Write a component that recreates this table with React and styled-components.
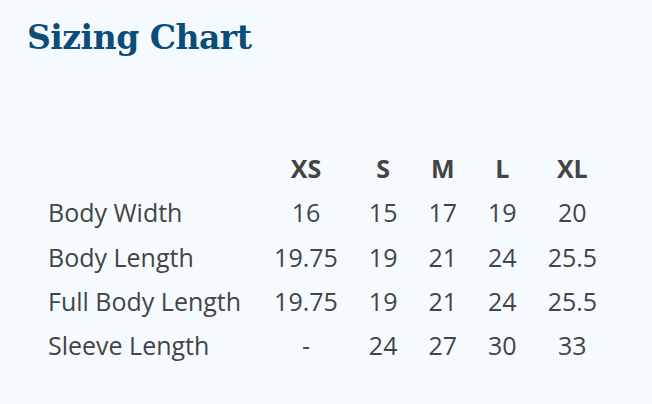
import React from "react";
import styled, { createGlobalStyle } from "styled-components";

const Global = createGlobalStyle`
  html, body { margin: 0; padding: 0; background: #f5faff; }
  body { font-family: "Open Sans", "Noto Sans", sans-serif; }
`;

const Page = styled.div`
  width: 652px;
  height: 404px;
  box-sizing: border-box;
  padding: 16px 0 0 27px;
  background: #f5faff;
`;

const Title = styled.h1`
  margin: 0;
  font-family: "DejaVu Serif", "Liberation Serif", serif;
  font-weight: bold;
  font-size: 33px;
  line-height: 44px;
  color: #0b4d78;
  letter-spacing: -0.5px;
`;

const Table = styled.table`
  margin: 86px 0 0 6px;
  border-collapse: collapse;
  color: #444;
  font-size: 25px;
`;

const Row = styled.tr`
  height: 44.3px;
`;

const HeadCell = styled.th`
  font-weight: 700;
  padding: 0 15.5px;
  text-align: center;
`;

const LabelCell = styled.td`
  padding: 0 17.5px 0 15px;
  text-align: left;
  white-space: nowrap;
`;

const ValueCell = styled.td`
  padding: 0 15.5px;
  text-align: center;
`;

const sizes = ["XS", "S", "M", "L", "XL"];
const rows = [
  ["Body Width", ["16", "15", "17", "19", "20"]],
  ["Body Length", ["19.75", "19", "21", "24", "25.5"]],
  ["Full Body Length", ["19.75", "19", "21", "24", "25.5"]],
  ["Sleeve Length", ["-", "24", "27", "30", "33"]],
];

export default function App() {
  return (
    <Page>
      <Global />
      <Title>Sizing Chart</Title>
      <Table>
        <thead>
          <Row>
            <th />
            {sizes.map((s) => (
              <HeadCell key={s}>{s}</HeadCell>
            ))}
          </Row>
        </thead>
        <tbody>
          {rows.map(([label, vals]) => (
            <Row key={label}>
              <LabelCell>{label}</LabelCell>
              {vals.map((v, i) => (
                <ValueCell key={i}>{v}</ValueCell>
              ))}
            </Row>
          ))}
        </tbody>
      </Table>
    </Page>
  );
}
